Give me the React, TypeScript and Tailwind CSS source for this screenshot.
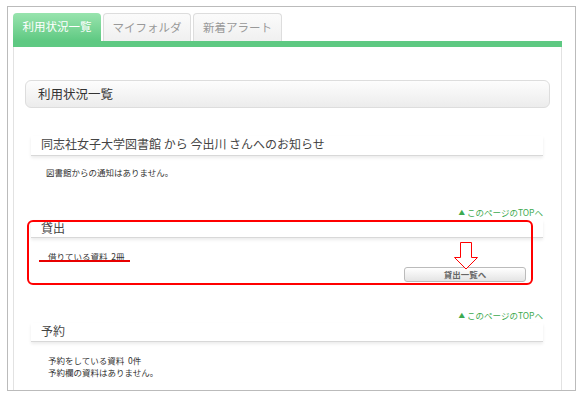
import React from 'react';

const font = { fontFamily: '"Noto Sans CJK JP", "Noto Sans", sans-serif' };

function SectionHead({ title, pb }: { title: string; pb: string }) {
  return (
    <div className={`pl-[10px] text-[12px] leading-[16px] text-[#444] border-b border-[#d8d8d8] shadow-[0_2px_3px_rgba(0,0,0,0.08)] ${pb}`}>
      {title}
    </div>
  );
}

function TopLink({ mt }: { mt: string }) {
  return (
    <div className={`flex justify-end ${mt}`}>
      <a className="text-[8.5px] leading-[12px] text-[#3daa4f] flex items-center gap-[2px]">
        <span className="text-[6.5px]">▲</span>
        <span>このページのTOPへ</span>
      </a>
    </div>
  );
}

export default function App() {
  return (
    <div className="relative w-[585px] h-[399px] bg-white overflow-hidden" style={font}>
      <div className="ml-[7px] mt-[6px] w-[569px] h-[385px] border border-[#bbb] pl-[5px] pt-[6px]">
        {/* tabs */}
        <div className="flex gap-[2px] h-[28px] items-end">
          <div className="w-[88px] h-[28px] rounded-t-[4px] bg-gradient-to-b from-[#98e4ae] to-[#5ec982] flex items-center justify-center text-[11.5px] text-white">
            利用状況一覧
          </div>
          <div className="w-[88px] h-[28px] rounded-t-[4px] border border-b-0 border-[#ddd] bg-gradient-to-b from-[#fbfbfb] to-[#f0f0f0] flex items-center justify-center text-[11.5px] text-[#999]">
            マイフォルダ
          </div>
          <div className="w-[89px] h-[28px] rounded-t-[4px] border border-b-0 border-[#ddd] bg-gradient-to-b from-[#fbfbfb] to-[#f0f0f0] flex items-center justify-center text-[11.5px] text-[#999]">
            新着アラート
          </div>
        </div>
        <div className="w-[549px] h-[6px] bg-[#5ec982]" />

        {/* panel */}
        <div className="w-[549px] h-[343px] border-x border-[#e2e2e2] px-[11px] pt-[33px]">
          <div className="h-[28px] rounded-[6px] border border-[#ddd] bg-gradient-to-b from-[#fdfdfd] to-[#ececec] flex items-center pl-[12px] text-[12.5px] text-[#333]">
            利用状況一覧
          </div>

          <div className="ml-[6px] w-[512px]">
            <div className="mt-[28px]">
              <SectionHead title="同志社女子大学図書館 から 今出川 さんへのお知らせ" pb="pb-[3px]" />
            </div>
            <p className="mt-[10px] pl-[15px] text-[8.5px] leading-[12px] text-[#333]">図書館からの通知はありません。</p>

            <TopLink mt="mt-[28px]" />

            <div className="mt-[2px]">
              <SectionHead title="貸出" pb="pb-[1px]" />
            </div>
            <p className="mt-[12px] pl-[17px] text-[8.5px] leading-[12px] text-[#333]">借りている資料&nbsp; 2冊</p>
            <div className="flex justify-end pr-[17px] mt-[5px]">
              <button className="w-[122px] h-[15px] rounded-[3px] border border-[#bbb] bg-gradient-to-b from-white to-[#e4e4e4] text-[8.5px] leading-[13px] font-semibold text-[#666]">
                貸出一覧へ
              </button>
            </div>

            <TopLink mt="mt-[27px]" />

            <div className="mt-[2px]">
              <SectionHead title="予約" pb="pb-[2px]" />
            </div>
            <div className="mt-[12px] pl-[17px] text-[8.5px] leading-[12px] text-[#333]">
              <p>予約をしている資料&nbsp; 0件</p>
              <p>予約欄の資料はありません。</p>
            </div>
          </div>
        </div>
      </div>

      {/* annotations */}
      <div className="absolute left-[27px] top-[220px] w-[506px] h-[65px] border-2 border-[#f00] rounded-[6px]" />
      <div className="absolute left-[39px] top-[260px] w-[91px] h-[2px] bg-[#e80000]" />
      <svg className="absolute left-[451px] top-[242px]" width="28" height="28" viewBox="0 0 28 28">
        <path d="M9.5 0.5 H20.5 V15.5 H26.5 L15 27 L3.5 15.5 H9.5 Z" fill="white" stroke="#f00" strokeWidth="1" />
      </svg>
    </div>
  );
}
